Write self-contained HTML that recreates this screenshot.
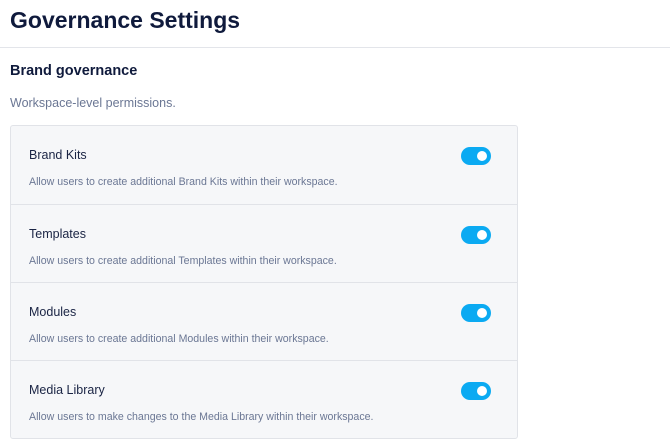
<!DOCTYPE html>
<html><head><style>
body{margin:0;width:670px;height:447px;background:#fff;font-family:"Liberation Sans",sans-serif;overflow:hidden;position:relative}
.t{position:absolute;left:10px;top:7px;font-size:23px;font-weight:bold;color:#0f1a3c;margin:0}
.hr{position:absolute;left:0;right:0;top:47px;border-top:1px solid #e3e5ea}
.h2{position:absolute;left:10px;top:63px;font-size:14.5px;font-weight:bold;color:#0f1a3c}
.sub{position:absolute;left:10px;top:96px;font-size:12.5px;color:#6b7794}
.card{position:absolute;left:10px;top:125px;width:506px;height:312px;border:1px solid #e1e3e8;border-radius:3px;background:#f6f7f9}
.row{position:absolute;left:0;width:506px;height:78px;border-top:1px solid #e1e3e8}
.row:first-child{border-top:none}
.rt{position:absolute;left:18px;top:22px;font-size:12.5px;color:#1a2444}
.rd{position:absolute;left:18px;top:50px;font-size:10.6px;color:#6b7794}
.tg{position:absolute;left:450px;top:21px;width:30px;height:18px;border-radius:9px;background:#0baaf2}
.tg:after{content:"";position:absolute;right:4px;top:4px;width:10px;height:10px;border-radius:50%;background:#fff}
</style></head><body>
<h1 class="t">Governance Settings</h1>
<div class="hr"></div>
<div class="h2">Brand governance</div>
<div class="sub">Workspace-level permissions.</div>
<div class="card">
<div class="row" style="top:0"><div class="rt">Brand Kits</div><div class="tg"></div><div class="rd">Allow users to create additional Brand Kits within their workspace.</div></div>
<div class="row" style="top:78px"><div class="rt">Templates</div><div class="tg"></div><div class="rd">Allow users to create additional Templates within their workspace.</div></div>
<div class="row" style="top:156px"><div class="rt">Modules</div><div class="tg"></div><div class="rd">Allow users to create additional Modules within their workspace.</div></div>
<div class="row" style="top:234px"><div class="rt">Media Library</div><div class="tg"></div><div class="rd">Allow users to make changes to the Media Library within their workspace.</div></div>
</div>
</body></html>
